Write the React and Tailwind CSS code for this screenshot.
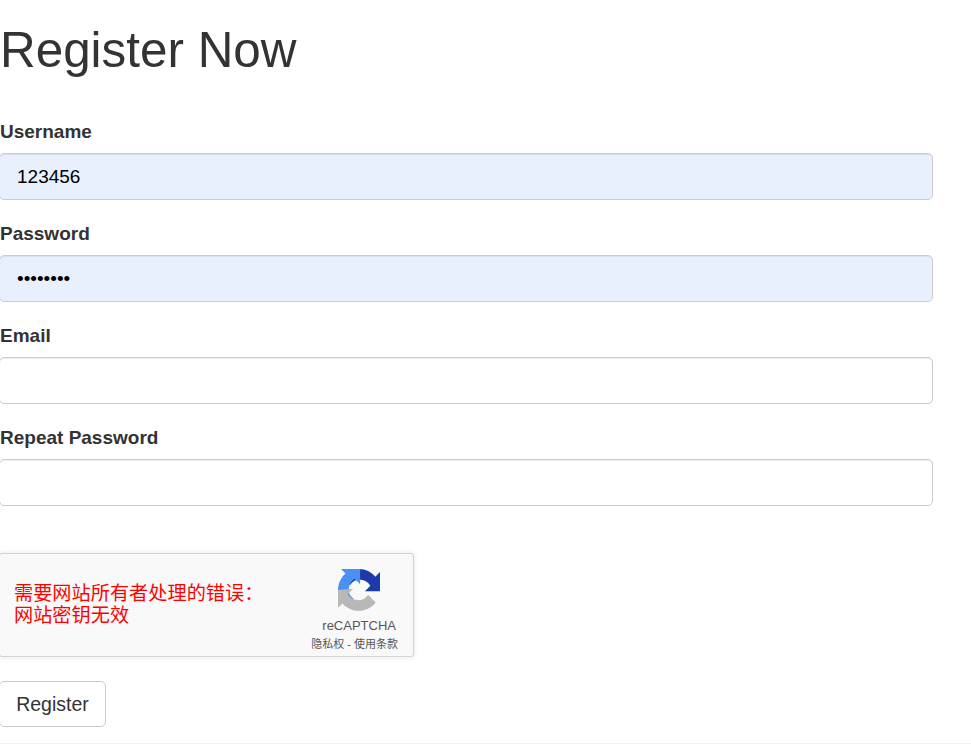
import React from 'react';

const inputClass = 'block -ml-px w-[934px] h-[47px] pl-[17px] pr-[16px] border border-[#ccc] rounded-[5px] text-[19px] text-black shadow-[inset_0_1px_1px_rgba(0,0,0,0.075)] outline-none';

function Field({ label, type = 'text', value = '', filled }) {
  return (
    <div className="mb-[22px]">
      <label className="block mb-[10px] h-[23px] leading-[23px] text-[19px] font-bold text-[#333]">{label}</label>
      <input type={type} value={value} readOnly className={`${inputClass} ${filled ? 'bg-[#e8f0fe]' : 'bg-white'}`} />
    </div>
  );
}

function RecaptchaLogo() {
  return (
    <svg width="42" height="42" viewBox="0 0 64 64" className="block">
      <path d="M64 31.955l-.033-1.37V4.687l-7.16 7.16C50.948 4.674 42.033.093 32.05.093c-10.4 0-19.622 4.96-25.458 12.64l11.736 11.86a15.55 15.55 0 0 1 4.754-5.334c2.05-1.6 4.952-2.906 9.968-2.906.606 0 1.074.07 1.417.2 6.216.49 11.604 3.92 14.776 8.9l-8.306 8.307 26.306-.014" fill="#1c3aa9" />
      <path d="M31.875.002l-1.37.033H4.612l7.16 7.16C4.6 13.054.018 21.97.018 31.953c0 10.4 4.96 19.622 12.64 25.458l11.86-11.736a15.55 15.55 0 0 1-5.334-4.754c-1.6-2.05-2.906-4.952-2.906-9.968 0-.606.07-1.074.2-1.417.49-6.216 3.92-11.604 8.9-14.776l8.307 8.306-.014-26.306" fill="#4a90f5" />
      <path d="M.002 31.953l.033 1.37v25.892l7.16-7.16c5.858 7.173 14.774 11.754 24.757 11.754 10.4 0 19.622-4.96 25.458-12.64l-11.736-11.86a15.55 15.55 0 0 1-4.754 5.334c-2.05 1.6-4.952 2.906-9.968 2.906-.606 0-1.074-.07-1.417-.2-6.216-.49-11.604-3.92-14.776-8.9l8.306-8.307L.002 31.953" fill="#b8b8b8" />
    </svg>
  );
}

export default function App() {
  return (
    <div className="w-[971px] h-[744px] overflow-hidden bg-white font-['Liberation_Sans','Noto_Sans_CJK_SC',sans-serif]">
      <h1 className="pt-[20px] h-[120px] text-[49.4px] leading-[60px] font-normal text-[#333]">Register Now</h1>
      <form className="w-[933px]">
        <Field label="Username" value="123456" filled />
        <Field label="Password" type="password" value="12345678" filled />
        <Field label="Email" />
        <Field label="Repeat Password" />
      </form>
      <div className="mt-[47px] -ml-px w-[415px] h-[104px] flex items-center justify-between bg-[#f9f9f9] border border-[#d3d3d3] rounded-[3px] shadow-[0_0_4px_1px_rgba(0,0,0,0.08)]">
        <p className="pl-[14px] text-[19.2px] leading-[22px] text-[#ff0000]">
          需要网站所有者处理的错误：<br />网站密钥无效
        </p>
        <div className="mr-[15px] flex flex-col items-end pt-[15px] h-full">
          <div className="mr-[18px]"><RecaptchaLogo /></div>
          <span className="mt-[7px] mr-[2px] text-[13px] leading-[16px] text-[#555]">reCAPTCHA</span>
          <span className="mt-[3px] text-[11px] leading-[14px] text-[#555] whitespace-nowrap">隐私权 - 使用条款</span>
        </div>
      </div>
      <button className="block mt-[24px] -ml-px pt-px h-[46px] w-[107px] bg-white border border-[#ccc] rounded-[5px] text-[19.5px] text-[#333]">Register</button>
      <div className="mt-[16px] border-t border-[#eee]" />
    </div>
  );
}
